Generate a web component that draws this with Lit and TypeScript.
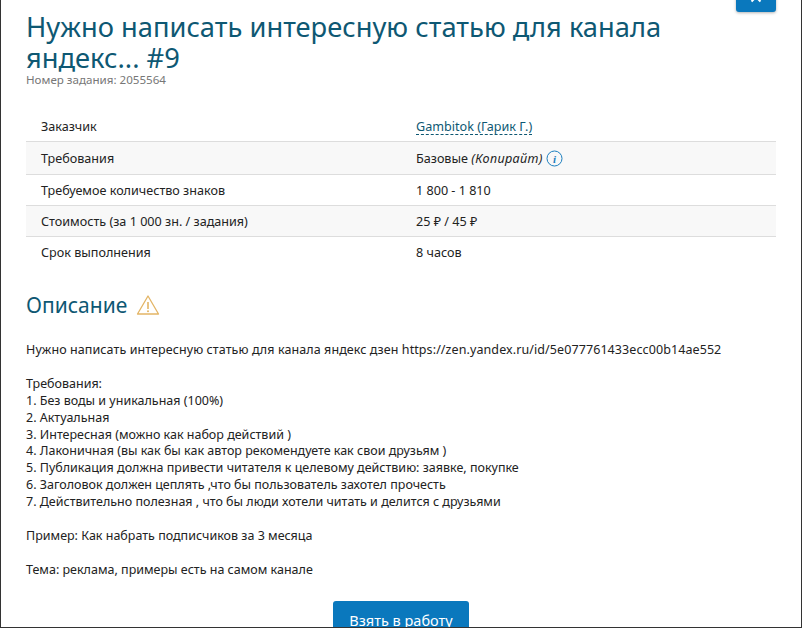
import { LitElement, html, css } from "lit";
import { customElement } from "lit/decorators.js";

@customElement("app-root")
export class AppRoot extends LitElement {
  static styles = css`
    :host { display: block; height: 628px; overflow: hidden; background: #fff; font-family: "Noto Sans", "Open Sans", sans-serif; color: #222; }
    .modal { position: relative; box-sizing: border-box; width: 802px; height: 628px; border: solid #333; border-width: 0 1px 1px 1px; padding: 11px 25px 0; overflow: hidden; }
    .close { position: absolute; top: -28px; right: 25px; width: 40px; height: 40px; border-radius: 3px; background: #0a78bd; box-shadow: 0 1px 3px rgba(0,0,0,.3); display: flex; align-items: flex-end; justify-content: center; padding-bottom: 9px; box-sizing: border-box; }
    h1 { margin: 0; max-width: 700px; font-size: 27.3px; line-height: 31px; font-weight: 400; color: #0e5873; }
    .num { font-size: 11.6px; line-height: 14px; color: #777; }
    .table { margin-top: 25px; font-size: 12.6px; }
    .row { display: grid; grid-template-columns: 375px 1fr; align-items: center; padding: 0 15px; height: 31px; border-bottom: 1px solid #ddd; box-sizing: border-box; }
    .row:last-child { border-bottom: 0; }
    .row.alt { background: #f8f8f8; }
    .row.short { height: 30px; }
    .row.tall { height: 33px; }
    .link { color: #0e5873; border-bottom: 1px dashed #0e5873; line-height: 14px; display: inline-block; }
    .val { display: flex; align-items: center; gap: 3px; }
    .val i { letter-spacing: .35px; }
    .val svg { margin-top: 1px; }
    .h2 { display: flex; align-items: center; gap: 9px; margin-top: 24px; }
    h2 { margin: 0; font-size: 21px; line-height: 26px; font-weight: 400; color: #0e5873; }
    .desc { margin-top: 24px; font-size: 12.5px; line-height: 16.9px; white-space: pre-line; color: #222; }
    .first { letter-spacing: .09px; }
    .actions { display: flex; justify-content: center; margin-top: 22px; }
    .btn { width: 136px; height: 40px; background: #0a78bd; color: #fff; border-radius: 3px; font-size: 14.5px; display: flex; justify-content: center; padding-top: 9px; box-sizing: border-box; line-height: 20px; }
    svg { display: block; }
  `;

  render() {
    const desc = `Требования:
1. Без воды и уникальная (100%)
2. Актуальная
3. Интересная (можно как набор действий )
4. Лаконичная (вы как бы как автор рекомендуете как свои друзьям )
5. Публикация должна привести читателя к целевому действию: заявке, покупке
6. Заголовок должен цеплять ,что бы пользователь захотел прочесть
7. Действительно полезная , что бы люди хотели читать и делится с друзьями

Пример: Как набрать подписчиков за 3 месяца

Тема: реклама, примеры есть на самом канале`;
    return html`
      <div class="modal">
        <div class="close">
          <svg width="12" height="12" viewBox="0 0 12 12"><path d="M1.5 1.5L10.5 10.5M10.5 1.5L1.5 10.5" stroke="#fff" stroke-width="2"/></svg>
        </div>
        <h1>Нужно написать интересную статью для канала яндекс... #9</h1>
        <div class="num">Номер задания: 2055564</div>
        <div class="table">
          <div class="row short"><div>Заказчик</div><div><span class="link">Gambitok (Гарик Г.)</span></div></div>
          <div class="row alt tall"><div>Требования</div><div class="val"><span>Базовые <i>(Копирайт)</i></span>
            <svg width="17" height="17" viewBox="0 0 17 17"><circle cx="8.5" cy="8.5" r="7.5" fill="none" stroke="#1c7fbf" stroke-width="1"/><text x="8.5" y="12.5" text-anchor="middle" font-size="11" font-style="italic" font-weight="700" fill="#1c7fbf" font-family="Liberation Serif">i</text></svg>
          </div></div>
          <div class="row"><div>Требуемое количество знаков</div><div>1 800 - 1 810</div></div>
          <div class="row alt"><div>Стоимость (за 1 000 зн. / задания)</div><div>25 ₽ / 45 ₽</div></div>
          <div class="row"><div>Срок выполнения</div><div>8 часов</div></div>
        </div>
        <div class="h2"><h2>Описание</h2>
          <svg width="24" height="22" viewBox="0 0 24 22"><path d="M12 2L22.5 20H1.5Z" fill="none" stroke="#e3b566" stroke-width="1.3" stroke-linejoin="round"/><path d="M12 8V15" stroke="#e3b566" stroke-width="1.6"/><circle cx="12" cy="17.3" r="1" fill="#e3b566"/></svg>
        </div>
        <div class="desc"><span class="first">Нужно написать интересную статью для канала яндекс дзен https://zen.yandex.ru/id/5e077761433ecc00b14ae552</span>

${desc}</div>
        <div class="actions"><div class="btn">Взять в работу</div></div>
      </div>
    `;
  }
}
